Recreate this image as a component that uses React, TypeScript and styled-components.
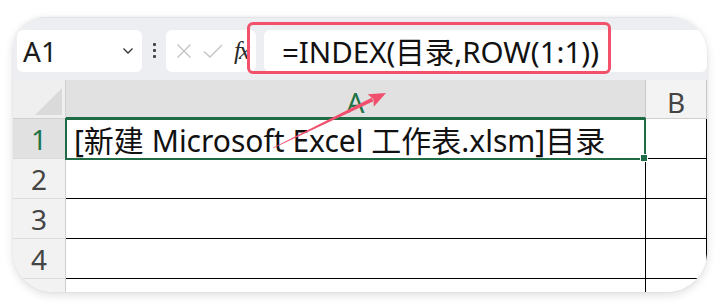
import React from "react";
import styled, { createGlobalStyle } from "styled-components";

const Global = createGlobalStyle`
  html, body { margin: 0; padding: 0; background: #ffffff; }
  body { font-family: "Noto Sans", "Noto Sans CJK SC", sans-serif; }
`;

const Page = styled.div`
  width: 720px;
  height: 305px;
  padding: 17px 0 0 13px;
  box-sizing: border-box;
  background: #fff;
`;

const Card = styled.div`
  position: relative;
  width: 694px;
  height: 275px;
  border-radius: 32px 36px 40px 40px;
  overflow: hidden;
  background: #fff;
  box-shadow: 0 3px 10px rgba(0, 0, 0, 0.13), 0 0 3px rgba(0, 0, 0, 0.06);
`;

const Toolbar = styled.div`
  display: flex;
  align-items: center;
  height: 63px;
  box-sizing: border-box;
  padding: 12px 0 9px 4px;
  background: #eceef1;
  border-top: 1px solid #e2e4e7;
`;

const Box = styled.div<{ $w?: number }>`
  display: flex;
  align-items: center;
  height: 42px;
  box-sizing: border-box;
  background: #fff;
  border-radius: 6px;
  ${(p) => (p.$w ? `width: ${p.$w}px;` : "flex: 1;")}
`;

const NameText = styled.span`
  flex: 1;
  padding-left: 6px;
  font-size: 28px;
  color: #1b1b1b;
`;

const Chevron = styled.svg`
  margin-right: 8px;
`;

const Dots = styled.div`
  display: flex;
  flex-direction: column;
  gap: 3px;
  margin: 0 10px 0 11px;
  span {
    width: 3px;
    height: 3px;
    background: #444;
    border-radius: 1px;
  }
`;

const FuncBox = styled(Box)`
  padding-left: 10px;
  gap: 11px;
  margin-right: 8px;
`;

const Fx = styled.span`
  font-family: "Liberation Serif", serif;
  font-style: italic;
  font-size: 25px;
  color: #2a2a2a;
  letter-spacing: -2px;
`;

const FormulaText = styled.span`
  padding-left: 18px;
  font-size: 29.5px;
  color: #111;
  white-space: nowrap;
`;

const Row = styled.div<{ $h: number }>`
  display: flex;
  height: ${(p) => p.$h}px;
`;

const Corner = styled.div`
  position: relative;
  width: 53px;
  flex: none;
  background: #efefef;
  border-right: 1px solid #d0d0d0;
  border-bottom: 1px solid #d0d0d0;
  box-sizing: border-box;
  &::after {
    content: "";
    position: absolute;
    right: 3px;
    bottom: 3px;
    border-style: solid;
    border-width: 0 0 27px 27px;
    border-color: transparent transparent #dadada transparent;
  }
`;

const ColHead = styled.div<{ $w?: number; $sel?: boolean }>`
  ${(p) => (p.$w ? `width: ${p.$w}px; flex: none;` : "flex: 1;")}
  display: flex;
  align-items: center;
  justify-content: center;
  box-sizing: border-box;
  padding-top: 6px;
  font-size: 28px;
  background: ${(p) => (p.$sel ? "#e1e1e1" : "#f3f3f3")};
  color: ${(p) => (p.$sel ? "#217346" : "#444")};
  border-right: 1px solid #c8c8c8;
  border-bottom: ${(p) => (p.$sel ? "2px solid #1f6b45" : "1px solid #cfcfcf")};
`;

const RowHead = styled.div<{ $sel?: boolean }>`
  width: 53px;
  flex: none;
  display: flex;
  align-items: center;
  justify-content: center;
  box-sizing: border-box;
  font-size: 28px;
  background: ${(p) => (p.$sel ? "#e1e1e1" : "#f2f2f2")};
  color: ${(p) => (p.$sel ? "#217346" : "#444")};
  border-right: 1px solid #cfcfcf;
  border-bottom: 1px solid #dcdcdc;
`;

const Cell = styled.div<{ $w?: number }>`
  ${(p) => (p.$w ? `width: ${p.$w}px; flex: none;` : "flex: 1;")}
  box-sizing: border-box;
  border-right: 1px solid #000;
  border-bottom: 1px solid #000;
  background: #fff;
`;

const SelCell = styled.div`
  position: relative;
  width: 581px;
  flex: none;
  margin-left: -1px;
  margin-top: -1px;
  height: 42px;
  box-sizing: border-box;
  border: 2px solid #1f6b45;
  display: flex;
  align-items: center;
  padding-left: 7px;
  font-size: 30px;
  color: #111;
  white-space: nowrap;
  background: #fff;
  z-index: 1;
  &::after {
    content: "";
    position: absolute;
    right: -4px;
    bottom: -4px;
    width: 6px;
    height: 6px;
    background: #1f6b45;
    border: 1px solid #fff;
  }
`;

const Highlight = styled.div`
  position: absolute;
  left: 234px;
  top: 5px;
  width: 364px;
  height: 52px;
  box-sizing: border-box;
  border: 3px solid #f2506b;
  border-radius: 6px;
  pointer-events: none;
`;

const ArrowSvg = styled.svg`
  position: absolute;
  left: 0;
  top: 0;
  pointer-events: none;
  z-index: 3;
`;

export default function App() {
  // arrow from (273,148) to (386,93) in page coords; card origin (13,17)
  const sx = 273 - 13, sy = 148 - 17, tx = 386 - 13, ty = 93 - 17;
  const dx = tx - sx, dy = ty - sy;
  const len = Math.hypot(dx, dy);
  const ux = dx / len, uy = dy / len;
  const px = -uy, py = ux;
  const hl = 17, hw = 7;
  const bx = tx - ux * hl, by = ty - uy * hl;
  const shaft = [
    [sx + px * 0.3, sy + py * 0.3],
    [bx + ux * 2 + px * 2, by + uy * 2 + py * 2],
    [bx + ux * 2 - px * 2, by + uy * 2 - py * 2],
    [sx - px * 0.3, sy - py * 0.3],
  ]
    .map((p) => p.join(","))
    .join(" ");
  const head = [
    [tx, ty],
    [bx + px * hw, by + py * hw],
    [bx + ux * 3, by + uy * 3],
    [bx - px * hw, by - py * hw],
  ]
    .map((p) => p.join(","))
    .join(" ");

  return (
    <>
      <Global />
      <Page>
        <Card>
          <Toolbar>
            <Box $w={125}>
              <NameText>A1</NameText>
              <Chevron width="12" height="8" viewBox="0 0 12 8">
                <path d="M1.5 1.5 L6 6 L10.5 1.5" fill="none" stroke="#333" strokeWidth="1.3" />
              </Chevron>
            </Box>
            <Dots>
              <span />
              <span />
              <span />
            </Dots>
            <FuncBox $w={90}>
              <svg width="16" height="16" viewBox="0 0 16 16">
                <path d="M1.5 1.5 L14.5 14.5 M14.5 1.5 L1.5 14.5" stroke="#c4c4c4" strokeWidth="1.4" fill="none" />
              </svg>
              <svg width="20" height="16" viewBox="0 0 20 16">
                <path d="M1 8.5 L7 14 L19 2" stroke="#c4c4c4" strokeWidth="1.4" fill="none" />
              </svg>
              <Fx>fx</Fx>
            </FuncBox>
            <Box>
              <FormulaText>=INDEX(目录,ROW(1:1))</FormulaText>
            </Box>
          </Toolbar>
          <Row $h={39}>
            <Corner />
            <ColHead $w={580} $sel>
              A
            </ColHead>
            <ColHead>B</ColHead>
          </Row>
          <Row $h={40}>
            <RowHead $sel>1</RowHead>
            <SelCell>[新建 Microsoft Excel 工作表.xlsm]目录</SelCell>
            <Cell />
          </Row>
          {[2, 3, 4, 0].map((n) => (
            <Row $h={40} key={n}>
              <RowHead>{n > 0 ? n : ""}</RowHead>
              <Cell $w={580} />
              <Cell />
            </Row>
          ))}
          <Highlight />
          <ArrowSvg width="694" height="275">
            <polygon points={shaft} fill="#f0506e" />
            <polygon points={head} fill="#f0506e" />
          </ArrowSvg>
        </Card>
      </Page>
    </>
  );
}
